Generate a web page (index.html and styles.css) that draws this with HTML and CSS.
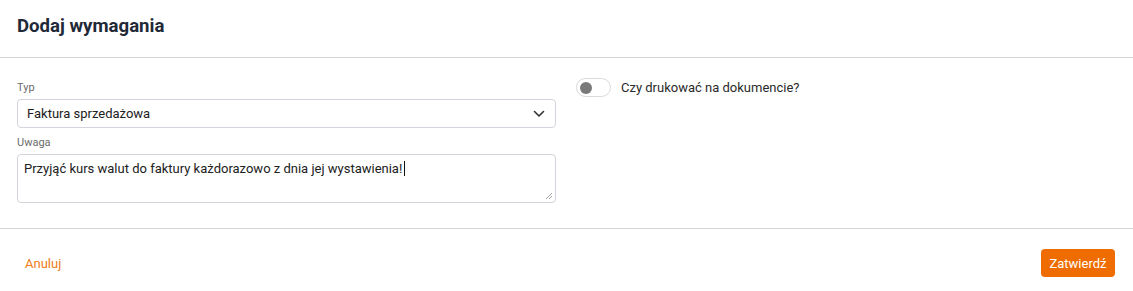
FILE: index.html
```html
<!DOCTYPE html>
<html lang="pl">
<head>
<meta charset="utf-8">
<link rel="stylesheet" href="styles.css">
</head>
<body>
<div class="dialog">
  <div class="header"><h1 class="title">Dodaj wymagania</h1></div>
  <div class="content">
    <div class="col">
      <label class="label">Typ</label>
      <div class="select">
        <span>Faktura sprzedażowa</span>
        <svg class="chev" width="12" height="8" viewBox="0 0 12 8"><path d="M1.5 1.5 L6 6 L10.5 1.5" fill="none" stroke="#333" stroke-width="1.6" stroke-linecap="round" stroke-linejoin="round"/></svg>
      </div>
      <label class="label label2">Uwaga</label>
      <div class="textarea">
        <span>Przyjąć kurs walut do faktury każdorazowo z dnia jej wystawienia!</span><span class="caret"></span>
        <svg class="grip" width="8" height="8" viewBox="0 0 8 8"><path d="M7 1 L1 7 M7 4 L4 7" stroke="#888" stroke-width="0.8"/></svg>
      </div>
    </div>
    <div class="col">
      <div class="toggle-row">
        <span class="toggle"><span class="knob"></span></span>
        <span class="toggle-text">Czy drukować na dokumencie?</span>
      </div>
    </div>
  </div>
  <div class="footer">
    <button class="btn-cancel">Anuluj</button>
    <button class="btn-ok">Zatwierdź</button>
  </div>
</div>
</body>
</html>
```
FILE: styles.css
```css
* { box-sizing: border-box; }
body {
  margin: 0;
  background: #fff;
  font-family: Roboto, "Noto Sans", sans-serif;
  color: #212121;
}
.dialog { width: 1133px; }
.header {
  height: 58px;
  padding: 0 17px;
  display: flex;
  align-items: center;
  border-bottom: 1px solid #d4d4d8;
}
.title {
  margin: 0;
  margin-top: -6px;
  font-size: 18.6px;
  font-weight: 700;
  color: #1f2937;
}
.content {
  display: grid;
  grid-template-columns: 539px 1fr;
  column-gap: 20px;
  padding: 23px 17px 25px;
  border-bottom: 1px solid #d4d4d8;
}
.col { display: flex; flex-direction: column; }
.label {
  font-size: 11px;
  color: #6b6b6b;
  line-height: 13px;
  margin-bottom: 5px;
}
.label2 { margin-top: 8px; }
.select {
  height: 29px;
  border: 1px solid #d1d5db;
  border-radius: 4px;
  display: flex;
  align-items: center;
  justify-content: space-between;
  padding: 0 9px 0 9px;
  font-size: 13px;
}
.chev { margin-right: 1px; }
.textarea {
  position: relative;
  height: 49px;
  border: 1px solid #d1d5db;
  border-radius: 4px;
  padding: 6px 6px;
  font-size: 13px;
  line-height: 16px;
}
.caret {
  display: inline-block;
  width: 1px;
  height: 15px;
  background: #111;
  vertical-align: -3px;
  margin-left: 2px;
}
.grip { position: absolute; right: 2px; bottom: 2px; }
.toggle-row {
  display: flex;
  align-items: center;
  gap: 10px;
  margin-top: -3px;
}
.toggle {
  width: 35px;
  height: 19px;
  border: 1.5px solid #d9d9de;
  border-radius: 10px;
  display: flex;
  align-items: center;
  padding-left: 3px;
}
.knob {
  width: 12px;
  height: 12px;
  border-radius: 50%;
  background: #7a7a7a;
}
.toggle-text { font-size: 13px; color: #2a2a2a; }
.footer {
  display: flex;
  justify-content: space-between;
  align-items: center;
  padding: 20px 18px 14px 17px;
}
.btn-cancel {
  background: none;
  border: none;
  font-family: inherit;
  font-size: 13px;
  color: #f07a1a;
  padding: 6px 8px;
  cursor: pointer;
}
.btn-ok {
  background: #ef6c00;
  color: #fff;
  border: none;
  border-radius: 4px;
  font-family: inherit;
  font-size: 13px;
  height: 28px;
  width: 74px;
  padding: 0;
  cursor: pointer;
}
```
